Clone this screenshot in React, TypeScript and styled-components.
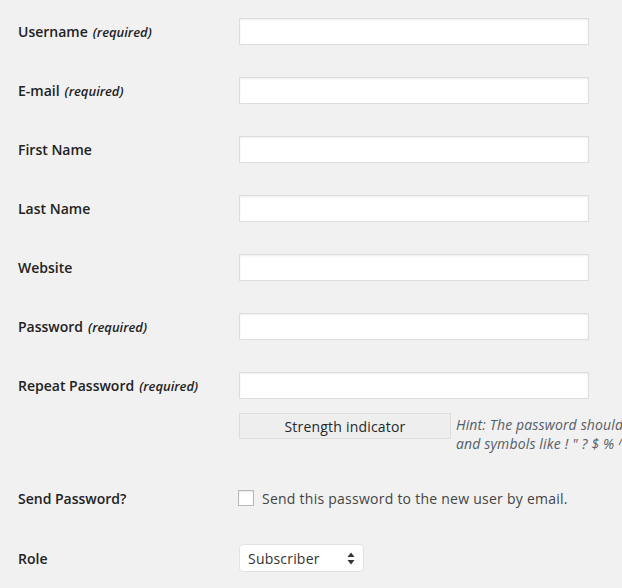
import React from "react";
import styled, { createGlobalStyle } from "styled-components";

const Global = createGlobalStyle`
  html, body {
    margin: 0;
    padding: 0;
    background: #f1f1f1;
    overflow: hidden;
  }
  body {
    font-family: "Open Sans", "Noto Sans", sans-serif;
    color: #444;
  }
`;

const Form = styled.div`
  padding: 2px 0 0 18px;
  width: 900px;
`;

const Row = styled.div<{ $top: number; $bottom: number }>`
  display: grid;
  grid-template-columns: 220px 1fr;
  align-items: start;
  padding: ${(p) => p.$top}px 0 ${(p) => p.$bottom}px;
`;

const Label = styled.label<{ $h: number }>`
  box-sizing: border-box;
  display: flex;
  align-items: center;
  gap: 5px;
  height: ${(p) => p.$h}px;
  padding-top: 1px;
  font-size: 14px;
  font-weight: 600;
  color: #222;
  line-height: 1;
`;

const Req = styled.span`
  font-size: 13px;
  font-style: italic;
  font-weight: 600;
  color: #222;
`;

const Input = styled.input`
  box-sizing: border-box;
  width: 350px;
  height: 27px;
  margin: 0 0 0 1px;
  padding: 3px 5px;
  border: 1px solid #ddd;
  background: #fff;
  box-shadow: inset 0 1px 2px rgba(0, 0, 0, 0.07);
  font-family: inherit;
  font-size: 14px;
  outline: none;
`;

const Control = styled.div`
  display: flex;
  flex-direction: column;
`;

const StrengthArea = styled.div`
  display: flex;
  align-items: flex-start;
  gap: 5px;
  margin-top: 14px;
  height: 47px;
`;

const Strength = styled.div`
  box-sizing: border-box;
  width: 212px;
  height: 26px;
  margin-left: 1px;
  flex: none;
  background: #eee;
  border: 1px solid #ddd;
  display: flex;
  align-items: center;
  justify-content: center;
  font-size: 14px;
  letter-spacing: 0.2px;
  color: #23282d;
`;

const Hint = styled.p`
  margin: 2px 0 0;
  font-size: 14px;
  letter-spacing: 0.15px;
  font-style: italic;
  line-height: 19px;
  color: #555d66;
  white-space: nowrap;
`;

const CheckLabel = styled.label`
  display: flex;
  align-items: center;
  gap: 8px;
  height: 16px;
  font-size: 14px;
  letter-spacing: 0.25px;
  color: #444;
`;

const Checkbox = styled.span`
  box-sizing: border-box;
  width: 16px;
  height: 16px;
  border: 1px solid #b4b9be;
  background: #fff;
  box-shadow: inset 0 1px 2px rgba(0, 0, 0, 0.1);
  flex: none;
`;

const Select = styled.div`
  box-sizing: border-box;
  width: 125px;
  height: 28px;
  margin-left: 1px;
  padding: 0 8px 0 8px;
  background: #fff;
  border: 1px solid #e2e2e2;
  border-radius: 4px;
  display: flex;
  align-items: center;
  justify-content: space-between;
  font-size: 14px;
  letter-spacing: 0.2px;
  color: #333;
`;

const Arrows = () => (
  <svg width="8" height="13" viewBox="0 0 8 13">
    <path d="M4 0.5 L7.5 5 L0.5 5 Z" fill="#333" />
    <path d="M4 12.5 L7.5 8 L0.5 8 Z" fill="#333" />
  </svg>
);

const textRows: { label: string; req?: boolean }[] = [
  { label: "Username", req: true },
  { label: "E-mail", req: true },
  { label: "First Name" },
  { label: "Last Name" },
  { label: "Website" },
  { label: "Password", req: true },
];

export default function App() {
  return (
    <>
      <Global />
      <Form>
        {textRows.map((r) => (
          <Row key={r.label} $top={16} $bottom={16}>
            <Label $h={27}>
              {r.label}
              {r.req && <Req>(required)</Req>}
            </Label>
            <Input type="text" />
          </Row>
        ))}
        <Row $top={16} $bottom={0}>
          <Label $h={27}>
            Repeat Password <Req>(required)</Req>
          </Label>
          <Control>
            <Input type="text" />
            <StrengthArea>
              <Strength>Strength indicator</Strength>
              <Hint>
                Hint: The password should be at least seven characters long. To make it stronger, use upper and lower case letters, numbers,
                <br />
                and symbols like ! " ? $ % ^ &amp; ).
              </Hint>
            </StrengthArea>
          </Control>
        </Row>
        <Row $top={30} $bottom={19}>
          <Label $h={16}>Send Password?</Label>
          <CheckLabel>
            <Checkbox />
            Send this password to the new user by email.
          </CheckLabel>
        </Row>
        <Row $top={19} $bottom={20}>
          <Label $h={28}>Role</Label>
          <Select>
            Subscriber
            <Arrows />
          </Select>
        </Row>
      </Form>
    </>
  );
}
